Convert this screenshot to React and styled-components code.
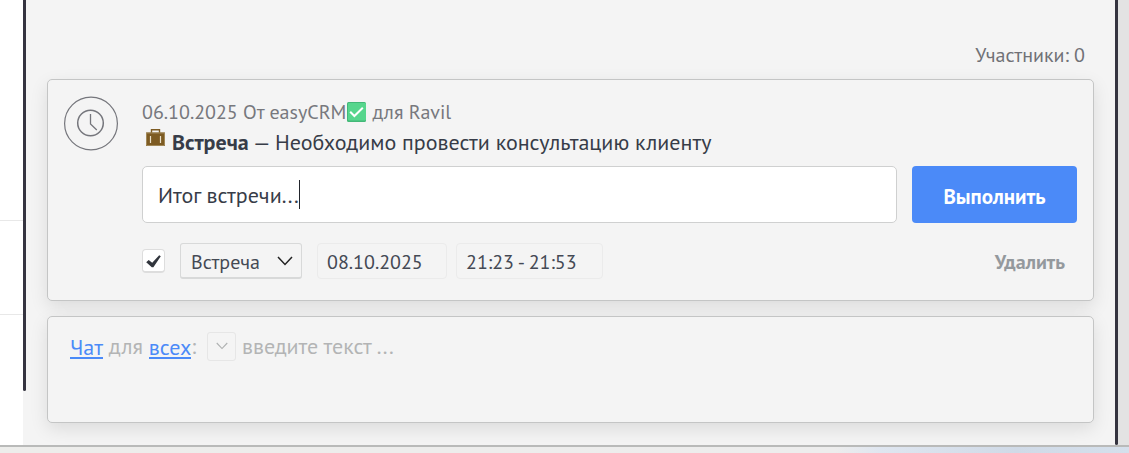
import React, { useState } from "react";
import styled, { createGlobalStyle } from "styled-components";

const GlobalStyle = createGlobalStyle`
  * { box-sizing: border-box; }
  body { margin: 0; background: #f4f4f4; }
  body, button, input, select {
    font-family: "PT Sans", "Noto Sans", "Open Sans", sans-serif;
  }
`;

const Page = styled.div`
  min-height: 100vh;
  display: flex;
  flex-direction: column;
  color: #373c48;
`;

const Workspace = styled.div`
  flex: 1;
  display: flex;
`;

const Sidebar = styled.aside`
  width: 23px;
  background: #ffffff;
`;

const SidebarItem = styled.div`
  height: ${(p) => (p.$tall ? "221px" : "94px")};
  border-bottom: 1px solid #e8e8e8;
`;

const ScrollTrack = styled.div`
  width: 3px;
  display: flex;
  align-items: ${(p) => (p.$full ? "stretch" : "flex-start")};
`;

const ScrollThumb = styled.div`
  width: 3px;
  height: ${(p) => (p.$full ? "auto" : "391px")};
  border-radius: 0 0 2px 2px;
  background: #353440;
`;

const Main = styled.main`
  flex: 1;
  min-width: 0;
  display: flex;
  flex-direction: column;
  padding: 40px 21px 22px;
  background: #f4f4f4;
`;

const Gutter = styled.div`
  width: 11px;
  background: #e3e3e3;
`;

const Members = styled.div`
  padding: 0 9px 9px;
  text-align: right;
  font-size: 20px;
  line-height: 30px;
  color: #707176;
`;

const Card = styled.section`
  border: 1px solid #c4c5c5;
  border-radius: 5px;
  background: #f4f4f4;
  box-shadow: 0 6px 18px rgba(0, 0, 0, 0.1);
`;

const TaskCard = styled(Card)`
  display: flex;
  gap: 24px;
  padding: 16px 16px 21px;
  margin-bottom: 15px;
`;

const TaskBody = styled.div`
  flex: 1;
  min-width: 0;
`;

const TaskMeta = styled.div`
  display: flex;
  align-items: center;
  height: 32px;
  font-size: 20px;
  line-height: 32px;
  white-space: pre;
  color: #77787d;
  svg { margin: 0 6px 0 1px; }
`;

const TaskTitle = styled.div`
  display: flex;
  height: 30px;
  padding-left: 4px;
  font-size: 22px;
  line-height: 28px;
  white-space: pre;
  svg { margin: 1px 7px 0 0; }
`;

const ResultForm = styled.div`
  display: flex;
  gap: 15px;
  margin-top: 8px;
`;

const ResultField = styled.label`
  flex: 1;
  min-width: 0;
  height: 57px;
  display: flex;
  align-items: center;
  padding: 0 15px;
  border: 1px solid #cfd0d0;
  border-radius: 5px;
  background: #ffffff;
`;

const ResultInput = styled.input`
  field-sizing: content;
  max-width: 100%;
  padding: 0;
  border: 0;
  outline: 0;
  background: transparent;
  font-size: 22px;
  line-height: 28px;
  color: #373c48;
`;

const Caret = styled.span`
  width: 1px;
  height: 29px;
  background: #22252c;
`;

const SubmitButton = styled.button`
  width: 165px;
  height: 57px;
  padding: 4px 0 0;
  border: 0;
  border-radius: 4px;
  background: #4b8af8;
  color: #ffffff;
  font-size: 21px;
  font-weight: 700;
`;

const Options = styled.div`
  display: flex;
  align-items: center;
  height: 36px;
  margin-top: 20px;
`;

const Tick = styled.label`
  display: grid;
  place-items: center;
  margin-right: 15px;
  > * { grid-area: 1 / 1; }
  svg { pointer-events: none; }
`;

const TickInput = styled.input`
  appearance: none;
  width: 23px;
  height: 24px;
  margin: 0;
  border: 1px solid #dddddd;
  border-bottom-width: 2px;
  border-radius: 4px;
  background: #ffffff;
`;

const SelectBox = styled.label`
  display: grid;
  align-items: center;
  width: 122px;
  margin-right: 15px;
  > * { grid-area: 1 / 1; }
  svg { justify-self: end; margin-right: 9px; pointer-events: none; }
`;

const Select = styled.select`
  appearance: none;
  width: 100%;
  height: 36px;
  padding: 2px 10px 0;
  border: 1px solid #d8d9d9;
  border-bottom-width: 2px;
  border-radius: 3px;
  background: transparent;
  color: #444954;
  font-size: 20px;
`;

const DateInput = styled.input`
  width: ${(p) => p.$width};
  height: 36px;
  margin-right: 9px;
  padding: 2px 9px 0;
  border: 1px solid #ebebeb;
  border-radius: 4px;
  background: transparent;
  color: #444954;
  font-size: 20px;
`;

const DeleteButton = styled.button`
  margin-left: auto;
  padding: 2px 12px 0;
  border: 0;
  background: transparent;
  color: #94999d;
  font-size: 20px;
  font-weight: 700;
`;

const ChatCard = styled(Card)`
  flex: 1;
  display: flex;
  align-items: flex-start;
  min-height: 107px;
  padding: 14px 22px;
`;

const ChatLine = styled.div`
  flex: 1;
  display: flex;
  align-items: center;
  height: 30px;
  font-size: 22px;
  line-height: 30px;
  white-space: pre;
  color: #b3b4b5;
`;

const ChatLink = styled.a`
  height: 27px;
  line-height: 30px;
  margin-top: -2px;
  border-bottom: 2px solid #4b8af8;
  color: #4b8af8;
  text-decoration: none;
`;

const MenuButton = styled.button`
  width: 29px;
  height: 29px;
  display: grid;
  place-items: center;
  margin: 0 6px 0 11px;
  padding: 0;
  border: 1px solid #e6e6e6;
  border-radius: 3px;
  background: transparent;
`;

const ChatInput = styled.input`
  flex: 1;
  min-width: 0;
  padding: 0;
  border: 0;
  outline: 0;
  background: transparent;
  font-size: 22px;
  color: #373c48;
  &::placeholder { color: #b3b4b5; opacity: 1; }
`;

const BottomEdge = styled.footer`
  height: 8px;
  border-top: 2px solid #b9bab9;
  background: linear-gradient(90deg, #ededeb 0%, #ededed 74%, #dfe6f0 78%, #d0dae7 90%, #d5e0ec 100%);
`;

function ClockIcon() {
  return (
    <svg width="54" height="55" viewBox="0 0 54 55" fill="none" stroke="#75767c">
      <circle cx="27" cy="27.5" r="26.4" strokeWidth="1.2" />
      <circle cx="26.5" cy="27" r="12.8" strokeWidth="1.5" />
      <path d="M26.5 18V28L32.8 34" strokeWidth="1.3" />
    </svg>
  );
}

function CheckBadge() {
  return (
    <svg width="19" height="20" viewBox="0 0 19 20" fill="none">
      <rect width="19" height="20" rx="1.5" fill="#43b878" />
      <rect x="1" y="1" width="18" height="17.5" rx="1" fill="#57d68d" />
      <path d="M3.2 9.8 7.4 14 15.8 5.8" stroke="#fff" strokeWidth="2" />
    </svg>
  );
}

function BriefcaseIcon() {
  return (
    <svg width="19" height="17" viewBox="0 0 19 17" fill="none">
      <path d="M5.5 4V.8h8V4" stroke="#7d5b22" strokeWidth="1.4" />
      <rect y="3.5" width="19" height="13.5" fill="#7d5b22" />
      <path d="M.5 4h18v12.5H.5z" stroke="#a18858" />
      <path d="M4.5 7v7M14.5 7v7" stroke="#e9dfc9" strokeWidth="1.2" />
    </svg>
  );
}

function TickIcon() {
  return (
    <svg width="15" height="13" viewBox="0 0 15 13">
      <path d="M.2 7.2 2.7 5 6.2 7.8 13.2.3 14.8 1.2 7.4 12.2 5.8 12.2Z" fill="#31353d" />
    </svg>
  );
}

function Chevron({ width, height, color }) {
  return (
    <svg width={width} height={height} viewBox="0 0 16 10" fill="none" stroke={color}>
      <path d="M1 1 8 8.4 15 1" strokeWidth="1.5" />
    </svg>
  );
}

export default function App() {
  const [result, setResult] = useState("Итог встречи...");
  return (
    <>
      <GlobalStyle />
      <Page>
        <Workspace>
          <Sidebar>
            <SidebarItem $tall />
            <SidebarItem />
          </Sidebar>
          <ScrollTrack>
            <ScrollThumb />
          </ScrollTrack>
          <Main>
            <Members>Участники: 0</Members>
            <TaskCard>
              <ClockIcon />
              <TaskBody>
                <TaskMeta>
                  06.10.2025 От easyCRM
                  <CheckBadge />
                  для Ravil
                </TaskMeta>
                <TaskTitle>
                  <BriefcaseIcon />
                  <strong>Встреча</strong> — Необходимо провести консультацию клиенту
                </TaskTitle>
                <ResultForm>
                  <ResultField>
                    <ResultInput
                      aria-label="Итог"
                      value={result}
                      onChange={(e) => setResult(e.target.value)}
                    />
                    <Caret />
                  </ResultField>
                  <SubmitButton type="button">Выполнить</SubmitButton>
                </ResultForm>
                <Options>
                  <Tick>
                    <TickInput type="checkbox" defaultChecked aria-label="Следующая задача" />
                    <TickIcon />
                  </Tick>
                  <SelectBox>
                    <Select aria-label="Тип задачи">
                      <option>Встреча</option>
                    </Select>
                    <Chevron width={16} height={10} color="#222" />
                  </SelectBox>
                  <DateInput $width="130px" aria-label="Дата" defaultValue="08.10.2025" />
                  <DateInput $width="147px" aria-label="Время" defaultValue="21:23 - 21:53" />
                  <DeleteButton type="button">Удалить</DeleteButton>
                </Options>
              </TaskBody>
            </TaskCard>
            <ChatCard>
              <ChatLine>
                <ChatLink href="#chat">Чат</ChatLink> для <ChatLink href="#all">всех</ChatLink>:
                <MenuButton type="button" aria-label="Выбрать получателя">
                  <Chevron width={12} height={8} color="#aeb0b0" />
                </MenuButton>
                <ChatInput aria-label="Сообщение" placeholder="введите текст ..." />
              </ChatLine>
            </ChatCard>
          </Main>
          <ScrollTrack $full>
            <ScrollThumb $full />
          </ScrollTrack>
          <Gutter />
        </Workspace>
        <BottomEdge />
      </Page>
    </>
  );
}
